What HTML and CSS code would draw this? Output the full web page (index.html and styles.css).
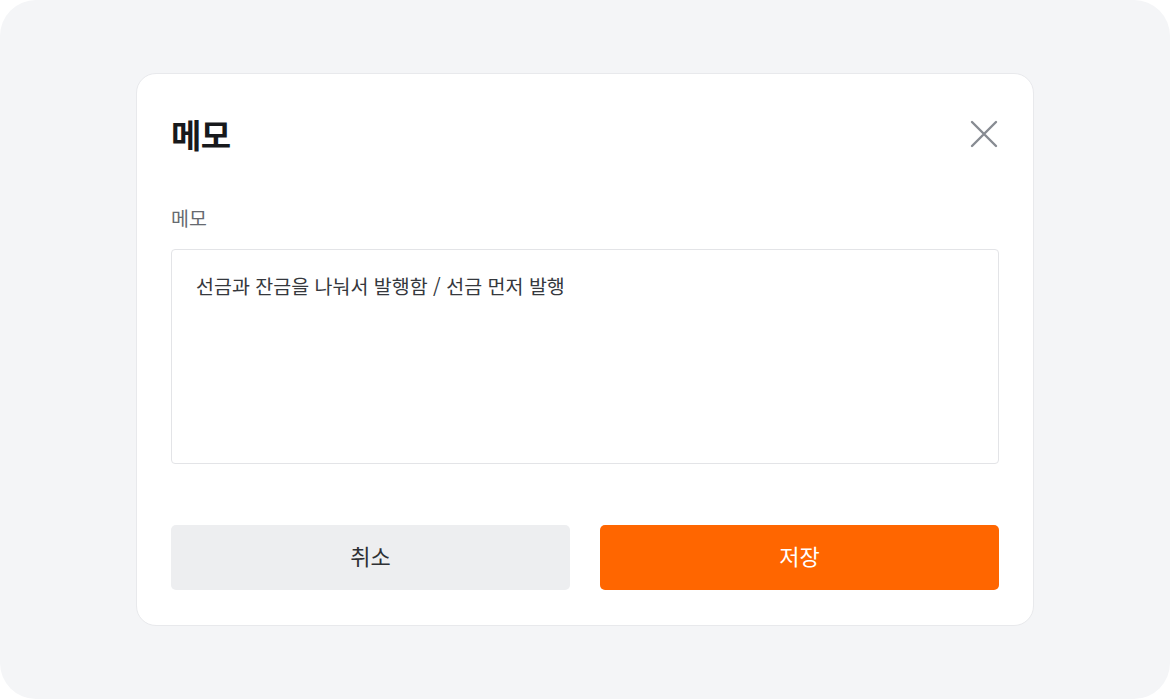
FILE: index.html
```html
<!DOCTYPE html>
<html lang="ko">
<head>
  <meta charset="UTF-8">
  <meta name="viewport" content="width=device-width, initial-scale=1.0">
  <title>메모</title>
  <link rel="stylesheet" href="styles.css">
</head>
<body>
<div class="screen">
  <div class="modal">
    <div class="modal-header">
      <h2 class="modal-title">메모</h2>
      <button class="close-btn" aria-label="닫기">
        <svg width="28" height="28" viewBox="0 0 28 28" fill="none">
          <path d="M2 2L26 26M26 2L2 26" stroke="#878b92" stroke-width="2.4" stroke-linecap="round"/>
        </svg>
      </button>
    </div>

    <label class="field-label" for="memo">메모</label>
    <textarea id="memo" class="memo-input">선금과 잔금을 나눠서 발행함 / 선금 먼저 발행</textarea>

    <div class="actions">
      <button class="btn btn-cancel">취소</button>
      <button class="btn btn-save">저장</button>
    </div>
  </div>
</div>
</body>
</html>
```

FILE: styles.css
```css
* {
  box-sizing: border-box;
}

body {
  margin: 0;
  background-color: #fff;
  font-family: 'Noto Sans CJK KR', 'Noto Sans', sans-serif;
}

.screen {
  width: 1170px;
  height: 699px;
  background-color: #f4f5f7;
  border-radius: 36px;
  display: flex;
  align-items: center;
  justify-content: center;
}

.modal {
  width: 898px;
  background-color: #fff;
  border: 1px solid #e8e9ec;
  border-radius: 20px;
  padding: 34px 34px 35px;
  display: flex;
  flex-direction: column;
}

.modal-header {
  height: 52px;
  display: flex;
  align-items: center;
  justify-content: space-between;
}

.modal-title {
  margin: 0;
  font-size: 33px;
  font-weight: 700;
  color: #17191c;
  letter-spacing: -0.5px;
}

.close-btn {
  background: none;
  border: none;
  padding: 0;
  margin-right: 1px;
  width: 28px;
  height: 28px;
  cursor: pointer;
  display: flex;
}

.field-label {
  margin-top: 45px;
  font-size: 19.5px;
  line-height: 26px;
  color: #666a70;
}

.memo-input {
  margin-top: 18px;
  height: 215px;
  width: 100%;
  border: 1px solid #e3e4e7;
  border-radius: 4px;
  padding: 23px 24px;
  font-family: inherit;
  font-size: 19.5px;
  line-height: 26px;
  color: #35383d;
  resize: none;
  outline: none;
}

.actions {
  margin-top: 61px;
  display: flex;
  gap: 30px;
}

.btn {
  flex: 1;
  height: 65px;
  border: none;
  border-radius: 5px;
  padding: 0 0 5px;
  font-family: inherit;
  font-size: 22px;
  cursor: pointer;
}

.btn-cancel {
  background-color: #edeef0;
  color: #2e3034;
}

.btn-save {
  background-color: #ff6600;
  color: #fff;
}
```
